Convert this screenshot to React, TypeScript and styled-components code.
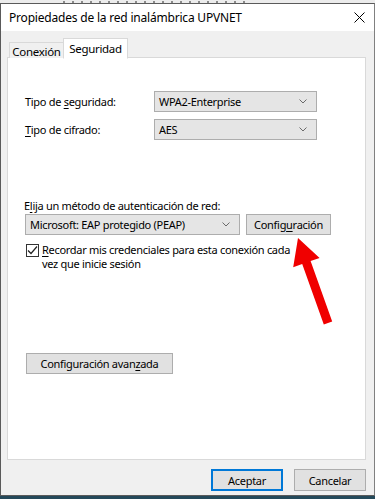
import React from "react";
import styled, { createGlobalStyle } from "styled-components";

const Global = createGlobalStyle`
  html, body { margin: 0; padding: 0; background: #1f4e63; }
  body { font-family: "Noto Sans", "Open Sans", sans-serif; font-size: 11px; color: #000; }
  * { box-sizing: border-box; }
`;

const Screen = styled.div`
  position: relative;
  width: 375px;
  height: 499px;
  overflow: hidden;
  background: #24495a;
  display: flex;
  flex-direction: column;
`;

const BackStrip = styled.div`
  height: 3px;
  flex: none;
  background: repeating-linear-gradient(
      90deg,
      #ececec 0px,
      #ececec 3px,
      #8a8a8a 3px,
      #8a8a8a 5px,
      #ececec 5px,
      #ececec 9px
    )
    60px 1px / 190px 2px no-repeat,
    #ececec;
`;

const Window = styled.div`
  width: 375px;
  height: 493px;
  flex: none;
  border: 1px solid #5a5a5a;
  border-right-color: #808080;
  background: #f0f0f0;
  display: flex;
  flex-direction: column;
`;

const TitleBar = styled.div`
  height: 27px;
  background: #fff;
  display: flex;
  align-items: center;
  justify-content: space-between;
  padding: 0 9px 0 8px;
  flex: none;
`;

const Title = styled.span`
  font-size: 12px;
  letter-spacing: -0.2px;
  color: #000;
`;

const CloseIcon = styled.svg`
  width: 11px;
  height: 11px;
`;

const Body = styled.div`
  flex: 1;
  display: flex;
  flex-direction: column;
  padding: 7px 8px 0 6px;
`;

const TabRow = styled.div`
  display: flex;
  align-items: flex-end;
  height: 20px;
  padding-left: 2px;
  position: relative;
  z-index: 1;
  margin-bottom: -1px;
`;

const Tab = styled.div<{ $active?: boolean; $w: number }>`
  width: ${(p) => p.$w}px;
  height: ${(p) => (p.$active ? 21 : 16)}px;
  padding-top: ${(p) => (p.$active ? 0 : 1)}px;
  border: 1px solid #d9d9d9;
  border-bottom: ${(p) => (p.$active ? "1px solid #fff" : "none")};
  background: ${(p) => (p.$active ? "#fff" : "#f0f0f0")};
  margin-left: ${(p) => (p.$active ? "-1px" : "0")};
  margin-bottom: ${(p) => (p.$active ? "-1px" : "0")};
  font-size: 11.5px;
  letter-spacing: -0.3px;
  display: flex;
  align-items: center;
  justify-content: center;
`;

const Panel = styled.div`
  background: #fff;
  border: 1px solid #d9d9d9;
  height: 403px;
  padding: 33px 16px 0 17px;
  display: flex;
  flex-direction: column;
  flex: none;
`;

const FieldRow = styled.div`
  display: grid;
  grid-template-columns: 129px 163px;
  align-items: center;
  margin-bottom: 7px;
  letter-spacing: -0.3px;
`;

const Select = styled.div<{ $w?: number }>`
  width: ${(p) => p.$w ?? 163}px;
  height: 21px;
  background: #e5e5e5;
  border: 1px solid #adadad;
  display: flex;
  align-items: center;
  justify-content: space-between;
  padding: 0 9px 0 4px;
  font-size: 11px;
  letter-spacing: -0.3px;
`;

const Chevron = () => (
  <svg width="8" height="5" viewBox="0 0 8 5">
    <path d="M0.5 0.5 L4 4 L7.5 0.5" fill="none" stroke="#6a6a6a" strokeWidth="1" />
  </svg>
);

const SectionLabel = styled.div`
  margin-top: 51px;
  margin-bottom: 1px;
  height: 15px;
  line-height: 15px;
  letter-spacing: -0.3px;
  margin-left: -1px;
`;

const AuthRow = styled.div`
  display: flex;
  gap: 6px;
  align-items: center;
`;

const Button = styled.div<{ $w: number; $h?: number; $default?: boolean }>`
  width: ${(p) => p.$w}px;
  height: ${(p) => p.$h ?? 21}px;
  background: #e1e1e1;
  border: 1px solid ${(p) => (p.$default ? "#0078d7" : "#adadad")};
  box-shadow: ${(p) => (p.$default ? "inset 0 0 0 1px #0078d7" : "none")};
  display: flex;
  align-items: center;
  justify-content: center;
  font-size: 11px;
  letter-spacing: -0.3px;
  flex: none;
`;

const CheckRow = styled.div`
  display: flex;
  align-items: flex-start;
  gap: 3px;
  margin-top: 8px;
  padding-left: 1px;
  line-height: 14px;
  letter-spacing: -0.3px;
`;

const Box = styled.div`
  width: 13px;
  height: 13px;
  border: 1px solid #333;
  background: #fff;
  flex: none;
  margin-top: 1px;
  display: flex;
  align-items: center;
  justify-content: center;
`;

const AdvancedWrap = styled.div`
  margin-top: 82px;
  padding-left: 1px;
`;

const Footer = styled.div`
  display: flex;
  justify-content: flex-end;
  gap: 11px;
  padding: 9px 0 0 0;
`;

const U = styled.span`
  text-decoration: underline;
  text-underline-offset: 2px;
`;

const ArrowSvg = styled.svg`
  position: absolute;
  left: 0;
  top: 0;
  pointer-events: none;
`;

export default function App() {
  return (
    <>
      <Global />
      <Screen>
        <BackStrip />
        <Window>
          <TitleBar>
            <Title>Propiedades de la red inalámbrica UPVNET</Title>
            <CloseIcon viewBox="0 0 11 11">
              <path d="M0.5 0.5 L10.5 10.5 M10.5 0.5 L0.5 10.5" stroke="#000" strokeWidth="1" />
            </CloseIcon>
          </TitleBar>
          <Body>
            <TabRow>
              <Tab $w={55}>Conexión</Tab>
              <Tab $w={65} $active>
                Seguridad
              </Tab>
            </TabRow>
            <Panel>
              <FieldRow>
                <span>
                  Tipo de <U>s</U>eguridad:
                </span>
                <Select>
                  <span>WPA2-Enterprise</span>
                  <Chevron />
                </Select>
              </FieldRow>
              <FieldRow>
                <span>
                  <U>T</U>ipo de cifrado:
                </span>
                <Select>
                  <span>AES</span>
                  <Chevron />
                </Select>
              </FieldRow>
              <SectionLabel>
                E<U>l</U>ija un método de autenticación de red:
              </SectionLabel>
              <AuthRow>
                <Select $w={215}>
                  <span>Microsoft: EAP protegido (PEAP)</span>
                  <Chevron />
                </Select>
                <Button $w={85}>
                  <span>
                    Config<U>u</U>ración
                  </span>
                </Button>
              </AuthRow>
              <CheckRow>
                <Box>
                  <svg width="11" height="11" viewBox="0 0 11 11">
                    <path d="M1 5.5 L4 8.5 L10 1.5" fill="none" stroke="#222" strokeWidth="1.2" />
                  </svg>
                </Box>
                <span>
                  <U>R</U>ecordar mis credenciales para esta conexión cada
                  <br />
                  vez que inicie sesión
                </span>
              </CheckRow>
              <AdvancedWrap>
                <Button $w={147}>
                  <span>
                    Configuración avan<U>z</U>ada
                  </span>
                </Button>
              </AdvancedWrap>
            </Panel>
            <Footer>
              <Button $w={72} $h={22} $default>
                Aceptar
              </Button>
              <Button $w={72} $h={22}>
                Cancelar
              </Button>
            </Footer>
          </Body>
        </Window>
        <ArrowSvg width="375" height="499" viewBox="0 0 375 499">
          <polygon
            points="298,238 319.6,257.9 310.6,261.1 332.2,321.5 323.8,324.5 302.2,264.1 293.2,267.3"
            fill="#f00000"
          />
        </ArrowSvg>
      </Screen>
    </>
  );
}
